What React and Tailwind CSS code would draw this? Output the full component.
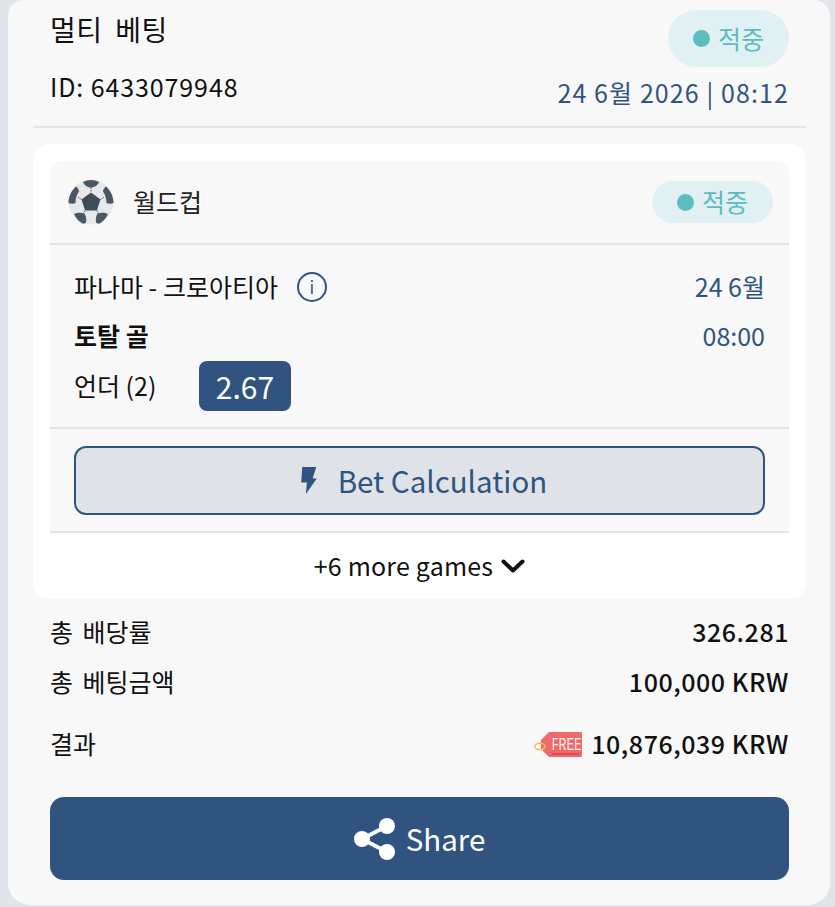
const FONT = "font-['Noto_Sans_CJK_KR','Noto_Sans',sans-serif]"

function StatusBadge({ big }) {
  return (
    <div className={`flex items-center justify-center rounded-full bg-[#e1f1f3] text-[#5cbcc0] w-[121px] gap-2 text-[25px] ${big ? 'h-[57px]' : 'h-[42px]'}`}>
      <span className="w-[17px] h-[17px] rounded-full bg-[#5cbcc0]" />
      <span>적중</span>
    </div>
  )
}

function SoccerBall() {
  return (
    <svg viewBox="0 0 46 46" className="w-[46px] h-[46px] shrink-0">
      <circle cx="23" cy="23" r="22.5" fill="#e6e8ea" />
      <path d="M23 13.500l9.500 7-3.600 11H17.100l-3.600-11z" fill="#3f4d5a" />
      <path d="M15 3C20 .2 26 .2 31 3c-1 3-4.500 5.500-8 5.500S16 6 15 3z" fill="#4b5864" />
      <path d="M8 7.500C3 12 .5 18 .5 24c2.500 1 5 1 7 0 0-4 1-8 3.500-11.500C11 10.500 9.800 8.500 8 7.500z" fill="#4b5864" />
      <path d="M38 7.500C43 12 45.500 18 45.500 24c-2.500 1-5 1-7 0 0-4-1-8-3.500-11.500C35 10.500 36.200 8.500 38 7.500z" fill="#4b5864" />
      <path d="M6 35c3-1.500 7-1.500 10.500-.5 1.500 2.500 2 5 1.500 9-1 1-2 1.500-3.500 1C10.500 42.500 8 39 6 35z" fill="#4b5864" />
      <path d="M40 35c-3-1.500-7-1.500-10.500-.5-1.500 2.500-2 5-1.500 9 1 1 2 1.500 3.500 1 4-2 6.500-5.500 8.500-9.500z" fill="#4b5864" />
      <path d="M23 8.500v5M32.500 20.500l4-2.500M13.500 20.500l-4-2.500M17.100 31.500l-2 3M28.900 31.500l2 3" stroke="#4b5864" strokeWidth="1" strokeDasharray="1.500 1" />
    </svg>
  )
}

function FreeTag() {
  return (
    <svg viewBox="0 0 48 26" className="w-[48px] h-[26px] shrink-0">
      <path d="M15 1h32q1 0 1 1v23q0 1-1 1H15L7 18v-9z" fill="#f0696a" />
      <ellipse cx="6" cy="15.500" rx="5" ry="3.200" fill="none" stroke="#efc04f" strokeWidth="1.500" />
      <text transform="translate(18 19) scale(0.66 1)" fontSize="16" fontWeight="500" fill="#fff" fontFamily="'Liberation Sans',sans-serif">FREE</text>
      <path d="M18 23h27" stroke="#c92f35" strokeWidth="1" />
    </svg>
  )
}

function SummaryRow({ label, value, className, children }) {
  return (
    <div className={`flex items-center justify-between text-[25px] text-[#111] ${className}`}>
      <span className="[word-spacing:4px]">{label}</span>
      <span className="flex items-center gap-[9px] font-medium tracking-[0.55px]">
        {children}
        {value}
      </span>
    </div>
  )
}

export default function App() {
  return (
    <div className={`${FONT} w-[835px] h-[907px] overflow-hidden bg-[#e1e4e8] pl-2 pr-[5px]`}>
      <div className="h-[905px] rounded-b-[22px] rounded-t-[16px] bg-[#f8f8f9] pl-[25px] pr-[24px]">
        {/* Encabezado */}
        <div className="h-[128px] border-b-2 border-[#e3e4ea] px-[17px] flex justify-between">
          <div className="text-[#111]">
            <div className="text-[28px] leading-[38px] mt-[10px] tracking-[0.5px] [word-spacing:6px]">멀티 베팅</div>
            <div className="text-[25px] leading-[34px] mt-[21px] tracking-[0.9px]">ID: 6433079948</div>
          </div>
          <div className="flex flex-col items-end">
            <div className="mt-[10px]"><StatusBadge big /></div>
            <div className="text-[25px] leading-[34px] mt-[8px] tracking-[1.1px] text-[#30547f]">24 6월 2026 | 08:12</div>
          </div>
        </div>

        {/* Tarjeta blanca */}
        <div className="mt-[16px] bg-white rounded-[16px] px-[17px] pt-[17px] h-[455px]">
          <div className="bg-[#f8f8f9] rounded-t-[12px]">
            <div className="h-[84px] border-b-2 border-[#e3e4ea] pl-[18px] pr-[16px] flex items-center justify-between">
              <div className="flex items-center gap-[19px]">
                <SoccerBall />
                <span className="text-[25px] text-[#222]">월드컵</span>
              </div>
              <StatusBadge />
            </div>

            <div className="h-[184px] border-b-2 border-[#e3e4ea] px-[24px] pt-[25px] text-[#111]">
              <div className="flex justify-between items-center h-[34px] text-[25px]">
                <span className="flex items-center gap-[19px]">
                  <span>파나마 - 크로아티아</span>
                  <span className="w-[30px] h-[30px] rounded-full border-2 border-[#30547f] text-[#30547f] text-[17px] flex items-center justify-center">i</span>
                </span>
                <span className="text-[#30547f]">24 6월</span>
              </div>
              <div className="flex justify-between items-center h-[34px] mt-[15px] text-[25px]">
                <span className="font-bold">토탈 골</span>
                <span className="text-[#30547f]">08:00</span>
              </div>
              <div className="flex items-center mt-[8px] text-[25px]">
                <span className="w-[125px]">언더 (2)</span>
                <span className="w-[92px] h-[50px] rounded-[8px] bg-[#30547f] text-white text-[30px] flex items-center justify-center">2.67</span>
              </div>
            </div>

            <div className="h-[104px] border-b-2 border-[#e3e4ea] px-[24px] pt-[17px]">
              <button className="w-full h-[69px] rounded-[12px] border-2 border-[#30547f] bg-[#dfe3e8] text-[#30547f] text-[29.5px] pl-[9px] flex items-center justify-center gap-[21px]">
                <svg viewBox="0 0 15 26" className="w-[16px] h-[27px]" fill="#30547f">
                  <path d="M1 0h13.500L11 11h4L4.500 26l1-11H0z" />
                </svg>
                <span>Bet Calculation</span>
              </button>
            </div>
          </div>

          <div className="h-[66px] flex items-center justify-center gap-[8px] text-[25px] tracking-[0.2px] text-[#111]">
            <span>+6 more games</span>
            <svg viewBox="0 0 24 14" className="w-[24px] h-[14px]" fill="none" stroke="#111" strokeWidth="4" strokeLinecap="round" strokeLinejoin="round">
              <path d="M2.500 2.500L12 11.500l9.500-9" />
            </svg>
          </div>
        </div>

        {/* Resumen */}
        <div className="px-[17px]">
          <SummaryRow label="총 배당률" value="326.281" className="h-[34px] mt-[16px]" />
          <SummaryRow label="총 베팅금액" value="100,000 KRW" className="h-[34px] mt-[16px]" />
          <SummaryRow label="결과" value="10,876,039 KRW" className="h-[34px] mt-[28px]">
            <FreeTag />
          </SummaryRow>
          <button className="mt-[36px] w-full h-[83px] rounded-[14px] bg-[#30547f] text-white text-[29.5px] flex items-center justify-center gap-[10px]">
            <svg viewBox="0 0 42 42" className="w-[42px] h-[42px]" fill="#fff">
              <circle cx="8" cy="21" r="8" />
              <circle cx="33" cy="8" r="8" />
              <circle cx="33" cy="34" r="8" />
              <path d="M8 21L33 8M8 21l25 13" stroke="#fff" strokeWidth="4" />
            </svg>
            <span>Share</span>
          </button>
        </div>
      </div>
    </div>
  )
}
